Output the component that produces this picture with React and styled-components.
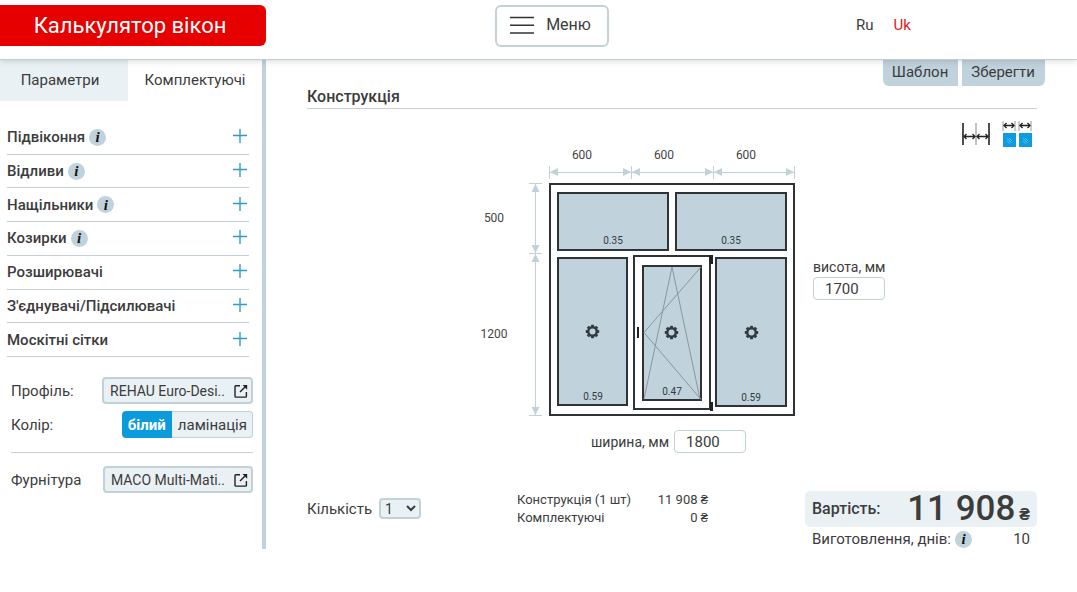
import { useState } from 'react';
import styled, { createGlobalStyle } from 'styled-components';


const accessories = [
    { title: 'Підвіконня', info: true },
    { title: 'Відливи', info: true },
    { title: 'Нащільники', info: true },
    { title: 'Козирки', info: true },
    { title: 'Розширювачі', info: false },
    { title: "З'єднувачі/Підсилювачі", info: false },
    { title: 'Москітні сітки', info: false },
]


const OpenIcon = () => (
    <svg width="14" height="14" viewBox="0 0 14 14" fill="none" stroke="#222" strokeWidth="1.4" aria-hidden="true">
        <path d="M6 1.700H1.800a.8.8 0 0 0-.8.8v9.800a.8.8 0 0 0 .8.8h9.800a.8.8 0 0 0 .8-.8V8" />
        <path d="M6 8 12 2" />
        <path d="M8.500 1h4.700v4.700Z" fill="#222" stroke="none" />
    </svg>
)

const BarsIcon = () => (
    <svg width="24" height="18" viewBox="0 0 24 18" stroke="#333" strokeWidth="1.6" aria-hidden="true">
        <path d="M0 1.500h24M0 9.200h24M0 17h24" />
    </svg>
)

const PlusIcon = () => (
    <svg width="14" height="14" viewBox="0 0 14 14" stroke="#2f9cc8" strokeWidth="1.4" aria-hidden="true">
        <path d="M7 0v14M0 6.500h14" />
    </svg>
)

const AxisSizeIcon = () => (
    <svg width="28" height="24" viewBox="0 0 28 24" fill="none" aria-hidden="true">
        <path d="M1 1v22M27 1v22" stroke="#222" strokeWidth="1.6" />
        <path d="M14 1v22" stroke="#999" strokeWidth="1.2" />
        <path d="M2 14.500h11M15 14.500h11M4.500 12 2 14.500 4.500 17M10.500 12l2.500 2.500-2.500 2.500M17.500 12 15 14.500l2.500 2.500M23.500 12l2.500 2.500-2.500 2.500" stroke="#222" strokeWidth="1.3" />
    </svg>
)

const GlassSizeIcon = () => (
    <svg width="30" height="28" viewBox="0 0 30 28" fill="none" aria-hidden="true">
        {[0, 16].map(x => (
            <g key={x} transform={`translate(${x} 0)`}>
                <path d="M1 1v10M13 1v10" stroke="#999" />
                <path d="M2 5.500h10M4.500 3 2 5.500 4.500 8M9.500 3l2.500 2.500L9.500 8" stroke="#222" strokeWidth="1.3" />
                <rect x="1" y="13" width="13" height="14" fill="#0f9be0" />
                <path d="m5 18.500 4.500 4.500M7 18l3 3M5 21l2.500 2.500" stroke="#5fc4f2" strokeWidth="0.9" />
            </g>
        ))}
    </svg>
)

const Gear = ({ x, y }) => (
    <g transform={`translate(${x} ${y})`}>
        <circle r="4.2" fill="none" stroke="#333b40" strokeWidth="2.4" />
        {[0, 45, 90, 135, 180, 225, 270, 315].map(a => (
            <rect key={a} x="-1.5" y="-6.700" width="3" height="2.400" rx="0.4" fill="#333b40" transform={`rotate(${a})`} />
        ))}
    </g>
)

const Pane = ({ x, y, w, h }) => (
    <rect x={x + 1} y={y + 1} width={w - 2} height={h - 2} fill="#c0d2dc" stroke="#2f3335" strokeWidth="2" />
)

// dimension lines between the neighbouring ticks
const HDim = ({ from, to }) => (
    <g fill="#c0d2d8">
        <path d={`M${from} 32.5H${to}M${from + 0.5} 26v13M${to + 0.5} 26v13`} stroke="#c0d2d8" />
        <path d={`M${from + 1} 32l8-4v8ZM${to} 32l-8-4v8Z`} />
    </g>
)

const VDim = ({ from, to }) => (
    <g fill="#c0d2d8">
        <path d={`M65.5 ${from}V${to}M59 ${from + 0.5}h13M59 ${to + 0.5}h13`} stroke="#c0d2d8" />
        <path d={`M65.5 ${from + 1}l-4 8h8ZM65.5 ${to}l-4-8h8Z`} />
    </g>
)

const WindowScheme = () => (
    <Scheme width="330" height="280" viewBox="0 0 330 280" role="img" aria-label="Конструкція">
        <HDim from={79} to={161} />
        <HDim from={161} to={243} />
        <HDim from={243} to={324} />
        <VDim from={43} to={113} />
        <VDim from={113} to={275} />

        <g fontSize="12" fill="#444">
            <text x="112" y="19">600</text>
            <text x="194" y="19">600</text>
            <text x="276" y="19">600</text>
            <text x="24" y="82">500</text>
            <text x="24" y="198">1200</text>
        </g>

        <rect x="80" y="44" width="244" height="231" fill="#fff" stroke="#2f3335" strokeWidth="2" />
        <Pane x={87} y={52} w={112} h={59} />
        <Pane x={205} y={52} w={112} h={59} />
        <Pane x={87} y={117} w={71} h={149} />
        <Pane x={245} y={117} w={72} h={150} />
        <rect x="164" y="116" width="76" height="153" fill="#fff" stroke="#2f3335" strokeWidth="2" />
        <Pane x={172} y={125} w={60} h={136} />

        <path d="M174 259 202 127l28 132M231 127l-57 65.500 57 67" fill="none" stroke="#8a979e" />
        <path d="M239 115h4v9h-3zM240 262h3v9h-3zM167 187h2v11h-2z" fill="#222" />

        <Gear x={122.5} y={191.5} />
        <Gear x={201.5} y={192.5} />
        <Gear x={281.5} y={192.5} />

        <g fontSize="10" fill="#333b40">
            <text x="143" y="104">0.35</text>
            <text x="261" y="104">0.35</text>
            <text x="123" y="260">0.59</text>
            <text x="202" y="255">0.47</text>
            <text x="281" y="261">0.59</text>
        </g>
    </Scheme>
)


const App = () => {

    const [lang, setLang] = useState('Uk')
    const [color, setColor] = useState('білий')
    const [tab, setTab] = useState('Комплектуючі')
    const [width, setWidth] = useState('1800')
    const [height, setHeight] = useState('1700')
    const [count, setCount] = useState('1')

    return (
        <>
            <GlobalStyle />

            <Header>
                <Brand>Калькулятор вікон</Brand>
                <MenuButton type="button"><BarsIcon />Меню</MenuButton>
                <Langs>
                    {['Ru', 'Uk'].map(l => (
                        <LangLink key={l} href={`#${l}`} $active={lang === l} onClick={() => setLang(l)}>{l}</LangLink>
                    ))}
                </Langs>
            </Header>

            <Page>
                <Sidebar>
                    <Tabs>
                        {['Параметри', 'Комплектуючі'].map(t => (
                            <Tab key={t} type="button" $active={tab === t} onClick={() => setTab(t)}>{t}</Tab>
                        ))}
                    </Tabs>

                    <Accordion>
                        {accessories.map(item => (
                            <AccordionRow key={item.title}>
                                {item.title}
                                {item.info && <Info type="button">i</Info>}
                                <PlusButton type="button" aria-label={item.title}><PlusIcon /></PlusButton>
                            </AccordionRow>
                        ))}
                    </Accordion>

                    <Options>
                        <OptionRow>
                            <span id="profile">Профіль:</span>
                            <PickButton type="button" aria-describedby="profile">REHAU Euro-Desi..<OpenIcon /></PickButton>
                        </OptionRow>
                        <OptionRow>
                            <span>Колір:</span>
                            <Switch>
                                {['білий', 'ламінація'].map(c => (
                                    <SwitchButton key={c} type="button" $active={color === c} onClick={() => setColor(c)}>{c}</SwitchButton>
                                ))}
                            </Switch>
                        </OptionRow>
                        <Divider />
                        <OptionRow>
                            <span id="fittings">Фурнітура</span>
                            <PickButton type="button" aria-describedby="fittings">MACO Multi-Mati..<OpenIcon /></PickButton>
                        </OptionRow>
                    </Options>
                </Sidebar>

                <Main>
                    <Actions>
                        <ActionButton type="button" $side="left">Шаблон</ActionButton>
                        <ActionButton type="button" $side="right">Зберегти</ActionButton>
                    </Actions>

                    <Title>Конструкція</Title>

                    <Stage>
                        <Center>
                            <WindowScheme />
                            <WidthField>
                                <label htmlFor="width">ширина, мм</label>
                                <SizeInput id="width" value={width} onChange={e => setWidth(e.target.value)} />
                            </WidthField>
                        </Center>
                        <Aside>
                            <Modes>
                                <ModeButton type="button" aria-label="Розміри по осях"><AxisSizeIcon /></ModeButton>
                                <ModeButton type="button" aria-label="Розміри по склу"><GlassSizeIcon /></ModeButton>
                            </Modes>
                            <HeightField>
                                <label htmlFor="height">висота, мм</label>
                                <SizeInput id="height" value={height} onChange={e => setHeight(e.target.value)} />
                            </HeightField>
                        </Aside>
                    </Stage>

                    <Summary>
                        <Quantity>
                            <label htmlFor="count">Кількість</label>
                            <Select id="count" value={count} onChange={e => setCount(e.target.value)}>
                                {['1', '2', '3', '4', '5'].map(n => <option key={n}>{n}</option>)}
                            </Select>
                        </Quantity>
                        <Prices>
                            <tbody>
                                <tr><th scope="row">Конструкція (1 шт)</th><td>11 908 ₴</td></tr>
                                <tr><th scope="row">Комплектуючі</th><td>0 ₴</td></tr>
                            </tbody>
                        </Prices>
                        <Total>
                            <Cost>
                                <b>Вартість:</b>
                                <Sum>11 908 <small>₴</small></Sum>
                            </Cost>
                            <Term>
                                Виготовлення, днів:<Info type="button">i</Info>
                                <Days>10</Days>
                            </Term>
                        </Total>
                    </Summary>
                </Main>
            </Page>
        </>
    )
}

export default App;


const GlobalStyle = createGlobalStyle`
    * {
        box-sizing: border-box;
    }
    body {
        margin: 0;
        background: #fff;
        color: #3c3c3c;
        font: 15px/20px Roboto, "Liberation Sans", sans-serif;
    }
    button, input, select {
        font: inherit;
        color: inherit;
        margin: 0;
    }
    button {
        padding: 0;
        border: 0;
        background: none;
        cursor: pointer;
    }
`

const Header = styled.header`
    position: relative;
    display: grid;
    grid-template-columns: 266px 1fr 239px;
    align-items: start;
    height: 60px;
    padding-top: 5px;
    background: #fff;
    border-bottom: 1px solid #c0cfd6;
    box-shadow: 0 2px 6px rgba(0, 0, 0, 0.12);
`

const Brand = styled.div`
    padding: 0 6px 0 0;
    border-radius: 0 6px 6px 0;
    background: #e60000;
    color: #fff;
    font-size: 22px;
    line-height: 41px;
    text-align: center;
`

const MenuButton = styled.button`
    display: flex;
    align-items: center;
    justify-self: center;
    gap: 12px;
    height: 42px;
    padding: 0 16px 2px 13px;
    border: 2px solid #c3d2d6;
    border-radius: 6px;
    font-size: 16px;
`

const Langs = styled.nav`
    display: flex;
    gap: 20px;
    padding: 10px 0 0 18px;
`

const LangLink = styled.a`
    color: ${({ $active }) => $active ? '#e02020' : '#3c3c3c'};
    text-decoration: none;
`

const Page = styled.div`
    display: flex;
    align-items: flex-start;
`

const Sidebar = styled.aside`
    flex: 0 0 266px;
    padding-bottom: 56px;
    border-right: 4px solid #c0d2dc;
`

const Tabs = styled.div`
    display: flex;
`

const Tab = styled.button`
    flex: ${({ $active }) => $active ? '1' : '0 0 128px'};
    height: 41px;
    padding: ${({ $active }) => $active ? '0 0 2px' : '0 8px 2px 0'};
    background: ${({ $active }) => $active ? '#fff' : '#e9f1f4'};
`

const Accordion = styled.ul`
    display: grid;
    grid-auto-rows: 1fr;
    min-height: 236px;
    margin: 20px 13px 20px 7px;
    padding: 0;
    list-style: none;
`

const AccordionRow = styled.li`
    display: flex;
    align-items: center;
    gap: 4px;
    border-bottom: 1px solid #c3cfd4;
    font-weight: 500;
`

const Info = styled.button`
    width: 17px;
    height: 17px;
    border-radius: 50%;
    background: #c0d2dc;
    color: #111;
    font: italic bold 15px/16px "Liberation Serif", serif;
`

const PlusButton = styled.button`
    display: flex;
    margin-left: auto;
    padding: 0 2px 2px 0;
`

const Options = styled.div`
    display: grid;
    gap: 7px;
    margin: 0 9px 0 11px;
`

const OptionRow = styled.div`
    display: flex;
    align-items: center;
    justify-content: space-between;
`

const PickButton = styled.button`
    display: flex;
    align-items: center;
    gap: 9px;
    height: 27px;
    padding: 0 3px 0 6px;
    border: 2px solid #c0d2d8;
    border-radius: 4px;
    background: #e9f1f4;
    font-size: 14px;
`

const Switch = styled.div`
    display: flex;
    border-radius: 4px;
    background: #e9f1f4;
    box-shadow: inset 0 0 0 1px #c0d2d8;
    overflow: hidden;
`

const SwitchButton = styled.button`
    height: 27px;
    padding: 0 6px;
    background: ${({ $active }) => $active ? '#0a9bdc' : 'transparent'};
    color: ${({ $active }) => $active ? '#fff' : '#3c3c3c'};
    font-weight: ${({ $active }) => $active ? '700' : '400'};
    border-radius: ${({ $active }) => $active ? '4px 0 0 4px' : '0'};
`

const Divider = styled.hr`
    width: 100%;
    margin: 7px 0 6px;
    border: 0;
    border-top: 1px solid #c3cfd4;
`

const Main = styled.main`
    flex: 1;
    min-width: 0;
    padding: 0 40px 0 41px;
`

const Actions = styled.div`
    display: flex;
    justify-content: flex-end;
    gap: 4px;
    margin-right: -8px;
`

const ActionButton = styled.button`
    height: 26px;
    padding: 0 10px 2px 9px;
    background: #c0d2dc;
    border-radius: ${({ $side }) => $side === 'left' ? '0 0 0 6px' : '0 0 6px 0'};
`

const Title = styled.h1`
    margin: 0;
    border-bottom: 1px solid #c3cfd4;
    font-size: 16px;
    line-height: 22px;
    font-weight: 500;
`

const Stage = styled.section`
    display: grid;
    grid-template-columns: minmax(0, 163px) 330px 1fr;
`

const Center = styled.div`
    grid-column: 2;
    padding-top: 31px;
`

const Scheme = styled.svg`
    display: block;

    text {
        text-anchor: middle;
    }
`

const WidthField = styled.div`
    display: flex;
    align-items: center;
    gap: 5px;
    margin-top: 10px;
    padding-left: 121px;
    font-size: 14px;
`

const SizeInput = styled.input`
    width: 72px;
    height: 23px;
    padding: 0 11px;
    border: 1px solid #c0d2d8;
    border-radius: 4px;
    font-size: 15px;
`

const Aside = styled.div`
    padding: 11px 4px 0 13px;
`

const Modes = styled.div`
    display: flex;
    align-items: center;
    justify-content: flex-end;
    gap: 12px;
    padding-right: 1px;
`

const ModeButton = styled.button`
    display: flex;
`

const HeightField = styled.div`
    display: flex;
    flex-direction: column;
    align-items: flex-start;
    margin-top: 109px;
    font-size: 14px;
`

const Summary = styled.section`
    display: grid;
    grid-template-columns: 210px 191px 1fr;
    align-items: start;
    margin-top: 38px;
`

const Quantity = styled.div`
    display: flex;
    align-items: center;
    gap: 7px;
    padding-top: 7px;
`

const Select = styled.select`
    width: 42px;
    height: 21px;
    border: 2px solid #c0d2d8;
    border-radius: 4px;
    background: #e9f1f4;
    font-size: 14px;
`

const Prices = styled.table`
    border-collapse: collapse;
    font-size: 13px;
    line-height: 18px;

    th, td {
        padding: 0;
        font-weight: 400;
        text-align: left;
        white-space: nowrap;
    }
    td {
        text-align: right;
    }
`

const Total = styled.div`
    justify-self: end;
    width: 232px;
`

const Cost = styled.div`
    display: flex;
    align-items: center;
    justify-content: space-between;
    height: 36px;
    padding: 0 7px;
    border-radius: 5px;
    background: #e9f1f4;

    b {
        font-size: 16px;
        font-weight: 500;
    }
`

const Sum = styled.span`
    display: flex;
    align-items: baseline;
    gap: 4px;
    padding-top: 6px;
    font-size: 35px;
    line-height: 36px;
    font-weight: 500;

    small {
        font-size: 16px;
        font-weight: 700;
    }
`

const Term = styled.div`
    display: flex;
    align-items: center;
    gap: 4px;
    padding: 2px 7px 0;
`

const Days = styled.span`
    margin-left: auto;
`
